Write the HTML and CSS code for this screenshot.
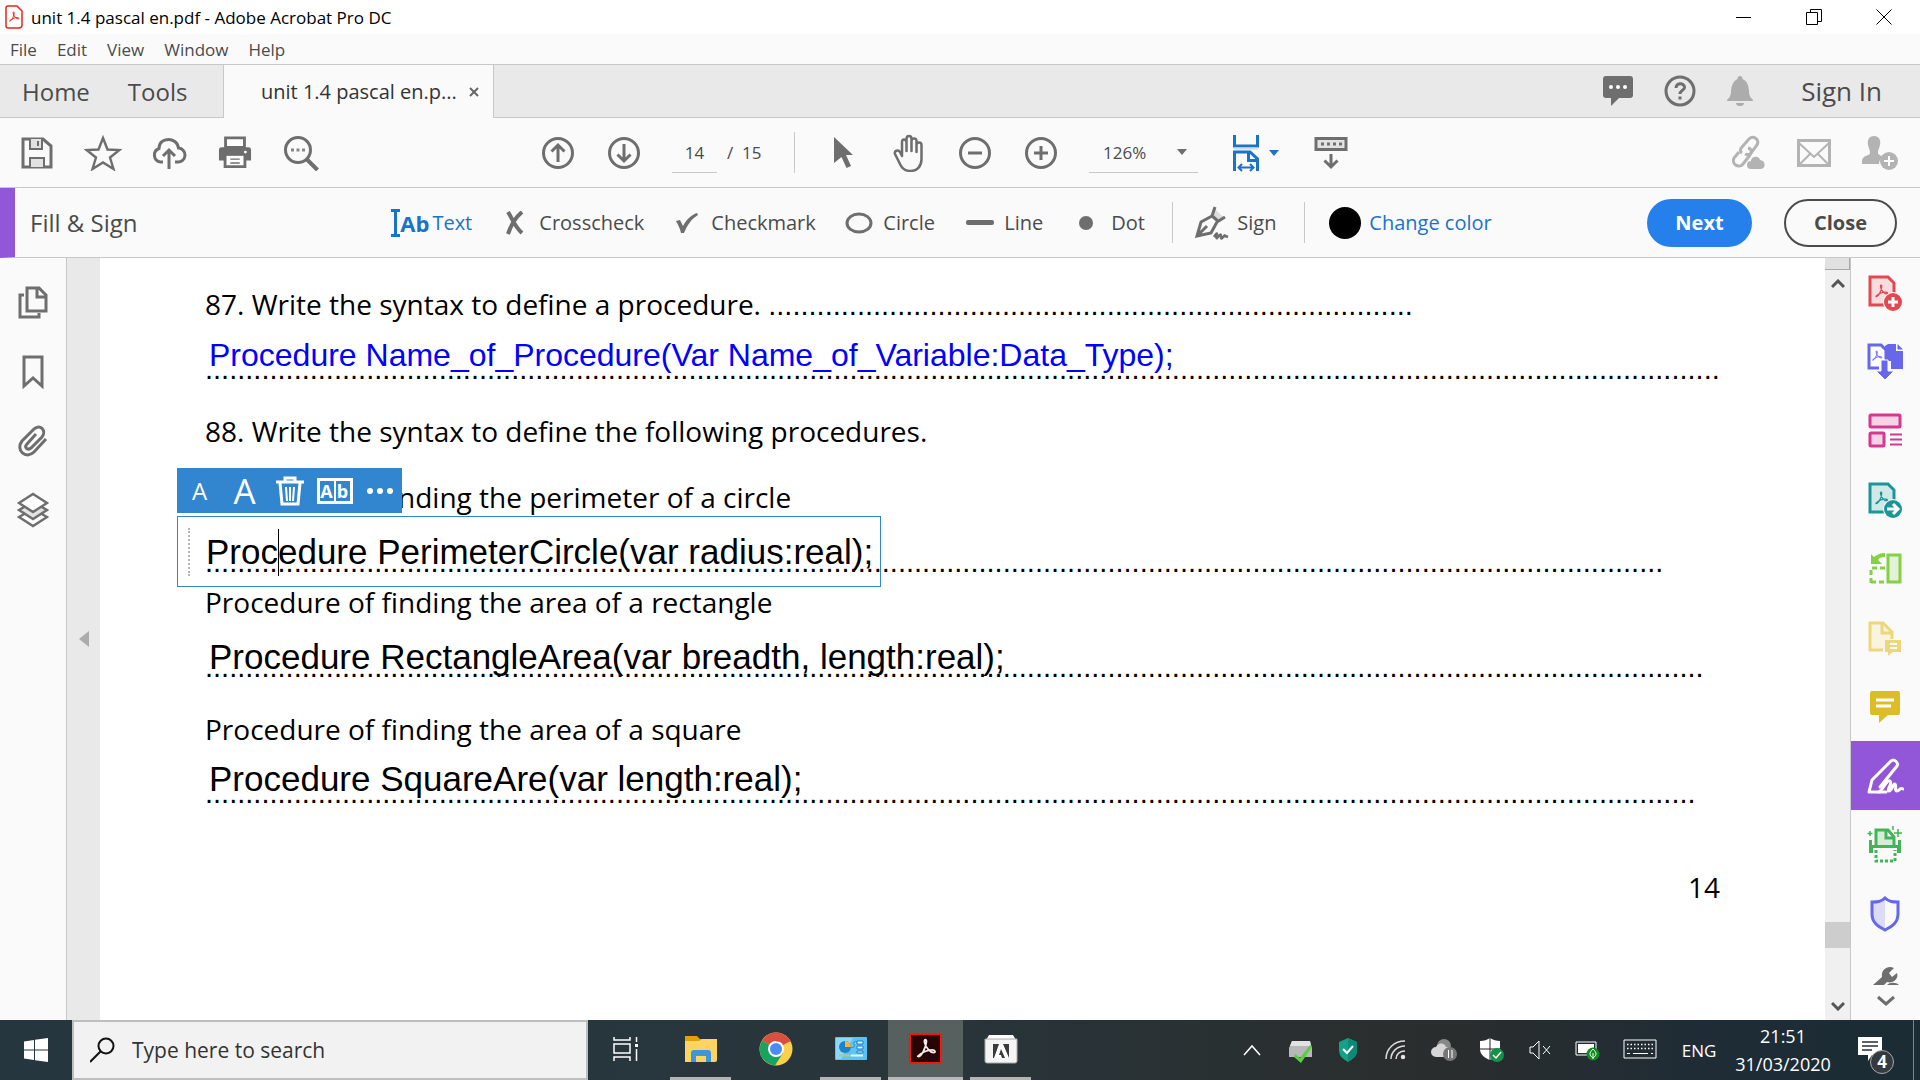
FILE: index.html
```html
<!DOCTYPE html>
<html lang="en">
<head>
<meta charset="utf-8">
<title>unit 1.4 pascal en.pdf - Adobe Acrobat Pro DC</title>
<link rel="stylesheet" href="styles.css">
</head>
<body>
<svg class="sprite" aria-hidden="true">
  <symbol id="acro" viewBox="0 0 24 24"><path fill="none" stroke="currentColor" stroke-width="2" stroke-linejoin="round" d="M3 20c3 2 9-9 9.500-16 0-3-3-3-2 1 1 5 6 11 10 11 2 0 2-3-2-3-5 0-12 3-15.500 7z"/></symbol>
</svg>
<div class="app">
  <header class="titlebar">
    <svg class="doc-icon" width="18" height="24" viewBox="0 0 18 24"><path d="M3 1h9l5 5v14a3 3 0 0 1-3 3H3a2 2 0 0 1-2-2V3a2 2 0 0 1 2-2z" fill="#fff" stroke="#e8251c" stroke-width="1.500"/><g color="#e8251c"><use href="#acro" x="3" y="6" width="12" height="12"/></g></svg>
    <span class="title">unit 1.4 pascal en.pdf - Adobe Acrobat Pro DC</span>
    <div class="window-buttons">
      <button aria-label="Minimize"><svg width="16" height="16"><path d="M0 8.500h15" stroke="#000" fill="none"/></svg></button>
      <button aria-label="Restore"><svg width="16" height="16" fill="none" stroke="#000"><path d="M.5 3.500h11v12H.5zM4.500 3.500v-3h11v12h-4"/></svg></button>
      <button aria-label="Close window"><svg width="16" height="16"><path d="M.5.500l15 15M15.500.500l-15 15" stroke="#000" fill="none"/></svg></button>
    </div>
  </header>
  <nav class="menubar"><button>File</button><button>Edit</button><button>View</button><button>Window</button><button>Help</button></nav>

  <div class="tabs">
    <div class="fixed-tabs"><button class="home">Home</button><button>Tools</button></div>
    <div class="doc-tab"><span>unit 1.4 pascal en.p...</span><button aria-label="Close tab"><svg width="12" height="12"><path d="M2 2l8 8M10 2l-8 8" stroke="#666" stroke-width="2"/></svg></button></div>
    <div class="account">
      <button aria-label="Comments"><svg width="32" height="34"><path d="M4 2h24a3 3 0 0 1 3 3v16a3 3 0 0 1-3 3H17l-8 8v-8H4a3 3 0 0 1-3-3V5a3 3 0 0 1 3-3z" fill="#6e6e6e"/><g fill="#fff"><circle cx="9" cy="13" r="2"/><circle cx="16" cy="13" r="2"/><circle cx="23" cy="13" r="2"/></g></svg></button>
      <button aria-label="Help"><svg width="32" height="32" fill="none" stroke="#6e6e6e" stroke-width="3"><circle cx="16" cy="16" r="14"/><path d="M12 13c0-6 9-5 8.500-.500C20 15.500 16 15.500 16 19M16 21.500v3"/></svg></button>
      <button aria-label="Notifications"><svg width="28" height="32" fill="#acacac"><path d="M14 1a2.500 2.500 0 0 1 2.500 3c5 2 6 7 6.500 12 0 4 1 6 4 9v1H1v-1c3-3 4-5 4-9 .5-5 2-10 6.500-12A2.500 2.500 0 0 1 14 1zM10 28h8a4 3 0 0 1-8 0z"/></svg></button>
      <a href="#signin">Sign In</a>
    </div>
  </div>

  <div class="toolbar">
    <div class="group file-group">
      <button aria-label="Save"><svg width="34" height="34" fill="none" stroke="#6e6e6e" stroke-width="3"><path d="M3 3h20l8 7v21H3z"/><path d="M10 3v10h12V3M10 31V22h14v9" stroke-width="2" fill="#e2e2e2"/><path d="M18 5v5" stroke-width="2"/></svg></button>
      <button aria-label="Star"><svg width="38" height="36"><path d="M19 3l4.500 11.500 12 .5-9.500 7.500 3.500 11.500L19 27.500 8.500 34 12 22.500 2.500 15l12-.500z" fill="none" stroke="#6e6e6e" stroke-width="2.400"/></svg></button>
      <button aria-label="Upload"><svg width="36" height="36" fill="none" stroke="#6e6e6e" stroke-width="3"><path d="M12 27H9.500a7 7 0 0 1-1.500-13.500C8 1.500 26 1.500 27.500 13A7 7 0 0 1 26.500 27H24M18 34V16M12 21l6-6 6 6"/></svg></button>
      <button aria-label="Print"><svg width="34" height="34" viewBox="0 0 36 36"><path d="M8 2h20v10H8z" fill="#fff" stroke="#6e6e6e" stroke-width="3"/><path d="M4 12h28a3 3 0 0 1 3 3v11h-5v8H6v-8H1V15a3 3 0 0 1 3-3z" fill="#6e6e6e"/><path d="M9 21h18v10H9z" fill="#fff"/><path d="M13 24.500h10M13 28.500h10" stroke="#6e6e6e" stroke-width="1.500"/><circle cx="29" cy="17" r="1.500" fill="#fff"/></svg></button>
      <button aria-label="Find"><svg width="36" height="36" fill="none" stroke="#6e6e6e" stroke-width="3"><circle cx="15" cy="15" r="12.500"/><path d="M23.500 24l11 11" stroke-width="4"/><path d="M8 15h3m2.500 0h3m2.500 0h3" stroke="#888"/></svg></button>
    </div>
    <div class="group view-group">
      <button aria-label="Previous page"><svg width="34" height="34" fill="none" stroke="#6e6e6e" stroke-width="3"><circle cx="17" cy="17" r="14.500"/><path d="M17 26V9M10.500 15.500L17 9l6.500 6.500"/></svg></button>
      <button aria-label="Next page"><svg width="34" height="34" fill="none" stroke="#6e6e6e" stroke-width="3"><circle cx="17" cy="17" r="14.500"/><path d="M17 8v17M10.500 18.500L17 25l6.500-6.500"/></svg></button>
      <label class="page-no"><input value="14" aria-label="Page number"></label><span class="page-total">/&nbsp; 15</span>
      <i class="divider"></i>
      <button aria-label="Select"><svg width="20" height="34" fill="#6e6e6e"><path d="M1 1l19 18h-7l5 11-4.500 2L8.500 21 1 27z"/></svg></button>
      <button aria-label="Hand"><svg width="34" height="38" fill="none" stroke="#6e6e6e" stroke-width="2.500" stroke-linejoin="round" stroke-linecap="round"><path d="M10 22V8c0-3.500 4-3.500 4.500 0v9-12c0-4 5-4 5 0v12-10c0-3.500 5-3.500 5 0v11-7c0-3.500 5-3.500 5 0v14c0 7-4 12-11 12-5 0-8-2-10-6L3 20c-1-3 3-5 5-2z"/></svg></button>
      <button aria-label="Zoom out"><svg width="34" height="34" fill="none" stroke="#6e6e6e" stroke-width="3"><circle cx="17" cy="17" r="14.500"/><path d="M10 17h14"/></svg></button>
      <button aria-label="Zoom in"><svg width="34" height="34" fill="none" stroke="#6e6e6e" stroke-width="3"><circle cx="17" cy="17" r="14.500"/><path d="M10 17h14M17 10v14"/></svg></button>
      <label class="zoom"><select aria-label="Zoom level"><option>126%</option></select><svg width="12" height="8"><path d="M1 1h10L6 7z" fill="#6e6e6e"/></svg></label>
      <button class="fit" aria-label="Fit width"><svg width="28" height="38" fill="none" stroke="#1b72cb" stroke-width="3"><path d="M2.500 1v11h23V1M2.500 37V18H18l7.500 7v12M16.500 18v8.500h8" /><path d="M2 14.500h24" stroke="#c9dcf0" stroke-width="2"/><path d="M7 33.500h14M10 30l-3.500 3.500L10 37M18 30l3.500 3.500L18 37" stroke-width="2"/></svg><svg width="10" height="8"><path d="M0 1h10L5 7z" fill="#1b72cb"/></svg></button>
      <button aria-label="Read mode"><svg width="34" height="34" fill="none" stroke="#6e6e6e" stroke-width="3"><path d="M2 2.500h30v11H2z" fill="#e2e2e2"/><path d="M7 8h3m3 0h3m3 0h3m3 0h3M17 18v13M10.500 24.500L17 31l6.500-6.500"/></svg></button>
    </div>
    <div class="group share-group">
      <button aria-label="Share link"><svg width="38" height="36" fill="none" stroke="#b3b3b3" stroke-width="3"><path d="M13 18c-3-2-1-5 0-6l7-8c4-4 11 0 8 6l-6 8c-2 2-4 2-6 1"/><path d="M19 13c4 1 4 4 2 7l-7 9c-4 5-12 0-9-6l5-6"/><path d="M22 34a4 4 0 0 1 0-8c0-5 8-6 9-1 6 0 6 9 1 9z" fill="#b3b3b3" stroke="none"/></svg></button>
      <button aria-label="Email"><svg width="34" height="28" fill="none" stroke="#b3b3b3" stroke-width="2"><path d="M1.500 1.500h31v25h-31z" stroke-width="3"/><path d="M2 4l15 14L32 4M2 26l11-11M32 26L21 15"/></svg></button>
      <button aria-label="Add people"><svg width="38" height="36" fill="#b3b3b3"><path d="M13 1c5 0 7 4 6 9-1 4-2 5-2 8 0 2 3 2 5 4-3 2-4 4-4 7H1v-3c0-6 8-5 8-8s-1-4-2-8c-1-5 1-9 6-9z"/><circle cx="28" cy="26" r="9"/><path d="M28 21v10M23 26h10" stroke="#fff" stroke-width="2"/></svg></button>
    </div>
  </div>

  <div class="fillbar">
    <h1>Fill &amp; Sign</h1>
    <div class="tools">
      <button class="blue t-text"><span class="ab"><svg width="9" height="28" fill="none" stroke="#1b72cb" stroke-width="3"><path d="M0 1.500h9M0 26.500h9M4.500 1v26"/></svg>Ab</span>Text</button>
      <button class="t-cross"><svg width="20" height="24" stroke="#6e6e6e" stroke-width="4" fill="none"><path d="M3 1c4 6 6 14 14 21M17 1C11 6 6 14 3 23"/></svg>Crosscheck</button>
      <button class="t-check"><svg width="24" height="22"><path d="M1 9l4-1 3 6C12 7 16 3 22 1l1 2C16 7 12 14 9 21H6C5 16 3 13 1 9z" fill="#6e6e6e"/></svg>Checkmark</button>
      <button class="t-circle"><svg width="28" height="22"><ellipse cx="14" cy="11" rx="12" ry="9" fill="none" stroke="#6e6e6e" stroke-width="3"/></svg>Circle</button>
      <button class="t-line"><svg width="28" height="6"><rect width="28" height="5" rx="2" fill="#6e6e6e"/></svg>Line</button>
      <button class="t-dot"><svg width="14" height="14"><circle cx="7" cy="7" r="7" fill="#6e6e6e"/></svg>Dot</button>
      <i class="divider"></i>
      <button class="t-sign"><svg width="34" height="34" fill="none" stroke="#6e6e6e" stroke-width="3"><path d="M20 3l9 9-4 4-8-7z" fill="#dcdcdc" stroke="none"/><path d="M20 1l-3 9L6 16 2 30l14-3 6-11 8-5M3 29l9-9M16 9l8 7"/><path d="M19 31c6-9 1 3 3 1s4-6 4-1 4-4 4-1l3 1" stroke-width="2.500"/></svg>Sign</button>
      <i class="divider"></i>
      <button class="blue t-color"><svg width="32" height="32"><circle cx="16" cy="16" r="16"/></svg>Change color</button>
    </div>
    <div class="actions"><button class="next">Next</button><button class="close">Close</button></div>
  </div>

  <main class="workspace">
    <aside class="left-pane">
      <button aria-label="Page thumbnails"><svg width="30" height="34" fill="none" stroke="#6e6e6e" stroke-width="3"><path d="M9 2h12l7 7v16H9zM19 2v9h9" /><path d="M6 9H2v22h19v-4"/></svg></button>
      <button aria-label="Bookmarks"><svg width="24" height="34" fill="none" stroke="#6e6e6e" stroke-width="3"><path d="M3 2h18v29l-9-8-9 8z"/></svg></button>
      <button aria-label="Attachments"><svg width="32" height="34" fill="none" stroke="#6e6e6e" stroke-width="3"><path d="M29 15L17 28c-8 8-19-2-12-11L17 5c6-6 13 2 8 8L14 24c-4 3-7-1-4-4l9-10"/></svg></button>
      <button aria-label="Layers"><svg width="34" height="36" fill="#fff" stroke="#6e6e6e" stroke-width="2.400"><path d="M3 25l14-8 14 8-14 9z"/><path d="M3 18l14-8 14 8-14 9z" fill="#e2e2e2"/><path d="M3 11l14-9 14 9-14 9z"/></svg></button>
    </aside>
    <button class="collapse" aria-label="Collapse pane"><svg width="10" height="16"><path d="M10 0v16L0 8z" fill="#acacac"/></svg></button>

    <article class="page">
      <p class="line">87. Write the syntax to define a procedure. <span class="leader">................................................................................</span></p>
      <div class="answer first">
        <span class="leader">............................................................................................................................................................................................</span>
        <span class="filled blue-ink">Procedure Name_of_Procedure(Var Name_of_Variable:Data_Type);</span>
      </div>
      <p class="line q88">88. Write the syntax to define the following procedures.</p>
      <p class="line sub">Procedure of finding the perimeter of a circle</p>
      <div class="answer">
        <span class="leader">.....................................................................................................................................................................................</span>
        <div class="editor">
          <div class="edit-menu">
            <button class="small-a" aria-label="Smaller text">A</button>
            <button class="big-a" aria-label="Larger text">A</button>
            <button aria-label="Delete"><svg width="28" height="30" fill="none" stroke="#fff" stroke-width="3"><path d="M0 6h28M9 5V2h10v3M4 7l2 21h16l2-21"/><path d="M10 11l1 14M14 11v14M18 11l-1 14" stroke-width="2"/></svg></button>
            <button aria-label="Comb field"><span class="comb"><span>A</span><span>b</span></span></button>
            <button aria-label="More"><svg width="26" height="6" fill="#fff"><circle cx="3" cy="3" r="3"/><circle cx="13" cy="3" r="3"/><circle cx="23" cy="3" r="3"/></svg></button>
          </div>
          <i class="grip"></i>
          <input value="Procedure PerimeterCircle(var radius:real);" aria-label="Answer">
          <i class="caret"></i>
        </div>
      </div>
      <p class="line">Procedure of finding the area of a rectangle</p>
      <div class="answer">
        <span class="leader">..........................................................................................................................................................................................</span>
        <span class="filled">Procedure RectangleArea(var breadth, length:real);</span>
      </div>
      <p class="line square">Procedure of finding the area of a square</p>
      <div class="answer last">
        <span class="leader">.........................................................................................................................................................................................</span>
        <span class="filled">Procedure SquareAre(var length:real);</span>
      </div>
      <p class="line folio">14</p>
    </article>

    <div class="scrollbar">
      <i class="split"></i>
      <button aria-label="Scroll up"><svg width="14" height="10"><path d="M1 8l6-6 6 6" fill="none" stroke="#555" stroke-width="3"/></svg></button>
      <i class="above"></i><i class="thumb"></i><i class="below"></i>
      <button aria-label="Scroll down"><svg width="14" height="10"><path d="M1 2l6 6 6-6" fill="none" stroke="#555" stroke-width="3"/></svg></button>
    </div>

    <aside class="right-pane">
      <button aria-label="Create PDF"><svg width="36" height="36" fill="none"><path d="M3 2h18l6 6v22H3z" fill="#f8dcde" stroke="#e34850" stroke-width="3"/><g color="#e34850"><use href="#acro" x="7" y="9" width="15" height="15"/></g><circle cx="26" cy="27" r="10" fill="#fafafa"/><circle cx="26" cy="27" r="9" fill="#e34850"/><path d="M26 22v10M21 27h10" stroke="#fff" stroke-width="3"/></svg></button>
      <button aria-label="Export PDF"><svg width="38" height="38"><path d="M13 25H3V2h12l5 5v9" fill="#fff" stroke="#6767ec" stroke-width="3"/><path d="M19 3l3-2h8v7h7v18H25v-8h-6z" fill="#6767ec"/><path d="M31.500 1L37 6.500h-5.500z" fill="#6767ec"/><g color="#6767ec"><use href="#acro" x="5" y="7" width="12" height="12"/></g><path d="M15 17h7v11h6l-9 9-9-9h5z" fill="#6767ec" stroke="#fafafa"/></svg></button>
      <button aria-label="Organize pages"><svg width="34" height="36" fill="#f5d2e6" stroke="#d83790" stroke-width="3"><rect x="2" y="2" width="30" height="12" rx="1"/><rect x="2" y="20" width="14" height="13" rx="1"/><path d="M22 21.500h12M22 26.500h12M22 31.500h12" stroke-width="2"/></svg></button>
      <button aria-label="Send"><svg width="36" height="36" fill="none"><path d="M3 2h18l6 6v22H3z" fill="#d0e8e8" stroke="#1b959a" stroke-width="3"/><g color="#1b959a"><use href="#acro" x="7" y="9" width="15" height="15"/></g><circle cx="26" cy="27" r="10" fill="#fafafa"/><circle cx="26" cy="27" r="9" fill="#1b959a"/><path d="M20 27h10M26 22l5 5-5 5" stroke="#fff" stroke-width="3"/></svg></button>
      <button aria-label="Rotate pages"><svg width="34" height="34" fill="none" stroke="#84d144" stroke-width="3"><rect x="20" y="3" width="12" height="27" fill="#e3f2d8"/><path d="M3 31V16h14M3 30h14" stroke-dasharray="5 3"/><path d="M3 2l3 3c3-2 6-4 11-4v4c-4 0-6 1-7 3l4 4H3z" fill="#84d144" stroke="none"/></svg></button>
      <button aria-label="Compare"><svg width="36" height="36" fill="none" stroke="#ecd87b" stroke-width="3"><path d="M16 30H3V3h13l9 9v7" fill="#f8f4e0"/><path d="M15 3v10h10"/><path d="M18 20h16v12h-8l-5 4v-4h-3z" fill="#ecd87b" stroke="none"/><path d="M23 24h7M23 28h7" stroke="#fff" stroke-width="2"/></svg></button>
      <button aria-label="Comment"><svg width="32" height="34"><path d="M3 1h26a2 2 0 0 1 2 2v20a2 2 0 0 1-2 2H19l-9 8v-8H3a2 2 0 0 1-2-2V3a2 2 0 0 1 2-2z" fill="#dcbd28"/><path d="M7 10h18M7 16h15" stroke="#fff" stroke-width="3"/></svg></button>
      <button class="selected-tool" aria-label="Fill and sign"><svg width="38" height="38" fill="none" stroke="#fff" stroke-width="3" stroke-linejoin="round" stroke-linecap="round"><path d="M20 35H3l3-12L25 4c3-3 8 2 6 5L14 30"/><path d="M13 35c4-2 8-13 11-11s-4 10-1 10 4-8 6-7-1 7 2 7 2-4 6-2"/></svg></button>
      <button aria-label="Scan"><svg width="36" height="38" fill="none" stroke="#44b556" stroke-width="3"><path d="M9 19V4h12l6 7v8M19 4v8h8" fill="#d5eed9"/><path d="M2 14v13h4v-5h24v5h4V14h-3v5H5v-5z" fill="#44b556" stroke="none"/><path d="M9 24v11h19V24" stroke-dasharray="3 2"/><path d="M3 5v5M.500 7.500h5M31 3v8M27 7h8M26 0v4" stroke-width="1.500"/></svg></button>
      <button aria-label="Protect"><svg width="30" height="36"><path d="M15 2C11 6 7 6 2 6v12c0 8 5 12 13 16z" fill="#dcdcf8"/><path d="M15 2C11 6 7 6 2 6v12c0 8 5 12 13 16 8-4 13-8 13-16V6c-5 0-9 0-13-4z" fill="none" stroke="#6767ec" stroke-width="3"/></svg></button>
      <button class="more" aria-label="More tools"><svg width="26" height="18" fill="#6e6e6e"><path d="M0 18l9-8c-1-7 5-12 12-9l-5 5 3 4 5-4c2 6-4 11-10 9l-3 3zM14 18c3-3 9-3 12 0z"/></svg><svg width="20" height="12"><path d="M2 2l8 7 8-7" stroke="#6e6e6e" stroke-width="3" fill="none"/></svg></button>
    </aside>
  </main>

  <footer class="taskbar">
    <button class="start" aria-label="Start"><svg width="24" height="24" fill="#fff"><path d="M0 3.500l10-1.500v9.500H0zM11 1.800L24 0v11.500H11zM0 12.500h10V22L0 20.500zM11 12.500h13V24l-13-1.800z"/></svg></button>
    <label class="search"><svg width="26" height="26" fill="none" stroke="#111" stroke-width="2"><circle cx="16" cy="9" r="7.500"/><path d="M10.500 14.500L0 25"/></svg><input placeholder="Type here to search" aria-label="Search"></label>
    <button class="task" aria-label="Task view"><svg width="26" height="24" fill="none" stroke="#fff" stroke-width="1.500"><path d="M1 0v3h16V0M1 24v-4h16v4M1 7h16v9H1zM23.500 0v5M23.500 12v12"/><path d="M22 7h3v3h-3z" fill="#fff" stroke="none"/></svg></button>
    <button class="task open" aria-label="File Explorer"><svg width="32" height="28"><path d="M0 1h12l3 3h15v6H0z" fill="#dfa20b"/><path d="M0 6h14l3-2h15v21a2 2 0 0 1-2 2H0z" fill="#fdd462"/><path d="M6 27V18a3 3 0 0 1 3-3h14a3 3 0 0 1 3 3v9h-5v-6H11v6z" fill="#3c96db"/></svg></button>
    <button class="task" aria-label="Chrome"><svg width="34" height="34"><circle cx="17" cy="17" r="16.500" fill="#fdd04b"/><path d="M17 17L3 8.500A16.500 16.500 0 0 1 31.500 9z" fill="#d94f41"/><path d="M17 17L3 8.500A16.500 16.500 0 0 0 16 33.500L24 21z" fill="#1aa260"/><circle cx="17" cy="17" r="8" fill="#fff"/><circle cx="17" cy="17" r="6" fill="#4c8bf5"/><path d="M17 9h14.500" stroke="#d94f41" stroke-width="1"/></svg></button>
    <button class="task open" aria-label="Control Panel"><svg width="32" height="24"><rect width="32" height="23" rx="1" fill="#5ac3f7"/><path d="M1 1h17L6 22H1z" fill="#8cd8fb"/><circle cx="10" cy="10" r="6" fill="#1f82c9"/><path d="M10 10V4a6 6 0 0 1 6 6z" fill="#ffb52b"/><path d="M16 10h3V5h3M22 4h6v3h-6zM22 9h6v3h-6zM22 14h6v2h-6z" fill="#e4f6ff" stroke="#1b7fc0"/><path d="M4 18.500h12" stroke="#b4c77f" stroke-width="2"/><path d="M16 18.500h12" stroke="#e4f6ff" stroke-width="2"/></svg></button>
    <button class="task open current" aria-label="Acrobat"><svg width="34" height="32"><rect x="1" y="1" width="31" height="29" fill="#280404" stroke="#f5170b" stroke-width="2"/><g color="#f4eeee"><use href="#acro" x="6" y="5" width="22" height="22"/></g></svg></button>
    <button class="task open" aria-label="Adobe installer"><svg width="34" height="30"><path d="M5 1h24l3 5H2z" fill="#fff"/><path d="M1 5h32v22a2 2 0 0 1-2 2H3a2 2 0 0 1-2-2z" fill="#f4f4f4" stroke="#aaa"/><path d="M9 10h16v14H9z" fill="#3a3a3a"/><path d="M10 24l5-14h4l6 14h-4l-4-9-2 6h2l1 3z" fill="#fff"/></svg></button>
    <div class="tray">
      <button aria-label="Show hidden icons"><svg width="18" height="14"><path d="M1 12l8-9 8 9" stroke="#fff" stroke-width="1.500" fill="none"/></svg></button>
      <button aria-label="Printer"><svg width="26" height="26"><path d="M5 4h18l2 7v9H2v-9z" fill="#b8b8ba"/><path d="M5 4h18l1 5H3z" fill="#e2e2e2"/><path d="M8 17l5 4L23 8l2 2-11 16-7-6z" fill="#58cf3e"/></svg></button>
      <button aria-label="Antivirus"><svg width="20" height="24"><path d="M10 0l9 4v8c0 6-4 9-9 12-5-3-9-6-9-12V4z" fill="#12a288"/><path d="M10 0l9 4v8c0 6-4 9-9 12z" fill="#0d8a75"/><path d="M5 11l4 4 6-7" fill="none" stroke="#fff" stroke-width="2"/></svg></button>
      <button aria-label="Network"><svg width="22" height="22" fill="none" stroke="#ddd" stroke-width="1.500"><path d="M1 20C1 10 9 2 20 2M6 20c0-7 6-13 14-13M11 20c0-5 4-8 9-8"/><circle cx="18" cy="18" r="1.500" fill="#fff"/></svg></button>
      <button aria-label="OneDrive"><svg width="26" height="24"><circle cx="13" cy="8" r="7" fill="#888"/><path d="M5 19a5 5 0 0 1 0-10c3-5 9-4 10 0 6 0 8 6 5 10z" fill="#d6d6d6"/><circle cx="19" cy="16" r="7" fill="#777"/><path d="M17.500 12v8M21 12v8" stroke="#fff"/></svg></button>
      <button aria-label="Defender"><svg width="26" height="26"><path d="M1 4c4 0 7-1 10-3 3 2 6 3 10 3v8c0 6-5 9-10 11C6 21 1 18 1 12z" fill="#fff"/><path d="M11 1v22M1 12h20" stroke="#222"/><circle cx="18" cy="18" r="7" fill="#16914a"/><path d="M14 18l3 3 5-6" stroke="#fff" stroke-width="1.500" fill="none"/></svg></button>
      <button aria-label="Volume muted"><svg width="22" height="20" fill="none" stroke="#fff"><path d="M1 7h3l6-6v18l-6-6H1zM14 6l7 8M21 6l-7 8"/></svg></button>
      <button aria-label="Battery"><svg width="26" height="22"><path d="M1 3h20v13H1z" fill="none" stroke="#fff"/><path d="M3 5h16v9H3z" fill="#fff"/><circle cx="18" cy="15" r="6.500" fill="#0e8a1e"/><path d="M18 10c4 4 4 6 0 9-4-3-4-5 0-9zM18 14v6" stroke="#fff" fill="none"/></svg></button>
      <button class="keys" aria-label="Keyboard"><svg width="34" height="22" fill="none" stroke="#fff"><path d="M1 1h32v18H1z"/><path d="M4 5.500h26M4 9.500h26" stroke-width="1.500" stroke-dasharray="1.500 2"/><path d="M4 14.500h3M10 14.500h15M28 14.500h2"/></svg></button>
      <button class="lang">ENG</button>
      <div class="clock"><span>21:51</span><span>31/03/2020</span></div>
      <button class="notify" aria-label="Notifications, 4 new"><svg width="24" height="26"><path d="M0 0h24v18H14l-4 6v-6H0z" fill="#fff"/><path d="M4 5h16M4 9h16M4 13h10" stroke="#243036" stroke-width="1.500"/></svg><b>4</b></button>
      <i class="peek"></i>
    </div>
  </footer>
</div>
</body>
</html>
```
FILE: styles.css
```css
* { box-sizing: border-box; }
body { margin: 0; font-family: "Open Sans", "Noto Sans", sans-serif; color: #4b4b4b; background: #fff; }
button { border: 0; background: none; padding: 0; margin: 0; font: inherit; color: inherit; display: flex; align-items: center; justify-content: center; white-space: nowrap; }
input, select { border: 0; background: none; padding: 0; margin: 0; font: inherit; color: inherit; outline: none; min-width: 0; }
a { color: inherit; text-decoration: none; }
svg { display: block; flex: none; }
i { display: block; }
.sprite { position: absolute; width: 0; height: 0; }
.app { display: flex; flex-direction: column; min-height: 100vh; background: #fafafa; }

.titlebar { display: flex; align-items: center; height: 34px; padding-left: 5px; background: #fff; color: #000; font-size: 17px; }
.title { margin-left: 8px; flex: 1; }
.window-buttons { display: flex; gap: 54px; padding-right: 28px; }
.menubar { display: flex; gap: 20px; height: 30px; padding-left: 10px; font-size: 17px; }

.tabs { display: flex; height: 54px; border-top: 1px solid #c8c8c8; background: #e9e9e9; font-size: 24px; }
.fixed-tabs { display: flex; gap: 38px; width: 224px; padding-left: 22px; border-right: 1px solid #c8c8c8; border-bottom: 1px solid #c8c8c8; }
.doc-tab { display: flex; align-items: center; justify-content: space-between; width: 269px; padding: 0 13px 0 37px; background: #fafafa; font-size: 20px; color: #333; }
.account { display: flex; flex: 1; align-items: center; justify-content: flex-end; gap: 30px; padding-right: 38px; border-left: 1px solid #c8c8c8; border-bottom: 1px solid #c8c8c8; }
.account a { margin-left: 17px; font-size: 26px; }

.toolbar { display: grid; grid-template-columns: 1fr auto 1fr; height: 70px; border-bottom: 1px solid #c8c8c8; font-size: 17px; }
.group { display: flex; align-items: center; }
.group button { width: 66px; height: 50px; }
.file-group { padding-left: 4px; }
.view-group { padding-right: 31px; }
.share-group { justify-content: flex-end; padding-right: 7px; }
.page-no { margin-left: 15px; width: 45px; height: 40px; border-bottom: 1px solid #c8c8c8; display: flex; }
.page-no input { width: 100%; text-align: center; }
.page-total { width: 77px; padding-left: 10px; }
.divider { width: 1px; height: 41px; background: #c8c8c8; }
.view-group .divider { margin-right: 15px; }
.zoom { display: flex; align-items: center; justify-content: space-between; width: 109px; height: 40px; margin-left: 15px; padding: 0 10px 0 14px; border-bottom: 1px solid #c8c8c8; }
.zoom select { appearance: none; width: 60px; }
.group .fit { width: 100px; gap: 9px; padding-left: 14px; }

.fillbar { display: grid; grid-template-columns: 1fr auto 1fr; align-items: center; height: 70px; border-bottom: 1px solid #c8c8c8; border-left: 15px solid #9256d9; font-size: 20px; }
.fillbar h1 { margin: 0 0 0 15px; font-size: 24px; font-weight: 400; }
.tools { display: flex; align-items: center; height: 46px; padding-right: 52px; }
.tools button { justify-content: flex-start; height: 46px; }
.blue { color: #1b72cb; }
.ab { display: flex; align-items: center; font-weight: 700; font-size: 22px; }
.tools .t-text { width: 114px; gap: 3px; }
.tools .t-cross { width: 170px; gap: 14px; }
.tools .t-check { width: 170px; gap: 12px; }
.tools .t-circle { width: 121px; gap: 10px; }
.tools .t-line { width: 113px; gap: 10px; }
.tools .t-dot { width: 93px; gap: 18px; }
.tools .t-sign { width: 131px; padding-left: 22px; gap: 8px; }
.tools .t-color { padding-left: 24px; gap: 8px; }
.actions { display: flex; justify-content: flex-end; gap: 32px; padding-right: 23px; font-weight: 700; }
.actions button { height: 48px; border-radius: 24px; }
.actions .next { width: 105px; background: #2680eb; color: #fff; }
.actions .close { width: 113px; border: 2px solid #4b4b4b; }

.workspace { display: flex; flex: 1; background: #fff; }
.left-pane { width: 67px; padding-top: 10px; border-right: 1px solid #c8c8c8; background: #fafafa; }
.left-pane button { width: 65px; height: 69px; }
.collapse { width: 33px; background: #e9e9e9; }
.page { flex: 1; min-width: 0; padding: 26px 0 0 105px; color: #000; overflow: hidden; white-space: nowrap; }
.line { margin: 0; height: 40px; line-height: 40px; font-size: 28px; }
.leader { height: 40px; line-height: 40px; font-family: "Liberation Sans", Arial, sans-serif; font-size: 29px; }
.answer { position: relative; display: flex; flex-direction: column; justify-content: flex-end; height: 50px; margin-top: 15px; }
.answer.first { height: 54px; margin-top: 11px; }
.answer.last { height: 54px; margin-top: 10px; }
.filled { position: absolute; left: 4px; top: 0; line-height: 40px; font-family: "Liberation Sans", Arial, sans-serif; font-size: 35px; }
.blue-ink { color: #00f; font-size: 32px; }
.q88 { margin-top: 22px; }
.sub { margin-top: 26px; }
.square { margin-top: 22px; }
.folio { margin-top: 54px; padding-right: 105px; text-align: right; }
.editor { position: absolute; left: -28px; top: -16px; width: 704px; height: 71px; padding: 15px 0 0 28px; border: 1px solid #3286d0; }
.editor input { display: block; width: 674px; height: 40px; font-family: "Liberation Sans", Arial, sans-serif; font-size: 35px; }
.edit-menu { position: absolute; left: -1px; top: -49px; width: 225px; height: 45px; display: grid; grid-template-columns: repeat(5, 1fr); background: #3286d0; color: #fff; }
.small-a { font-size: 24px; }
.big-a { font-size: 35px; line-height: 40px; }
.comb { display: flex; width: 36px; height: 26px; border: 3px solid #fff; font-size: 18px; font-weight: 700; line-height: 20px; }
.comb span { flex: 1; }
.comb span + span { border-left: 2px solid #fff; }
.grip { position: absolute; left: 10px; top: 11px; height: 48px; border-left: 2px dotted #b5b5b5; }
.caret { position: absolute; left: 100px; top: 12px; width: 1px; height: 47px; background: #000; }

.scrollbar { display: flex; flex-direction: column; width: 25px; background: #f0f0f0; }
.split { height: 12px; background: #e1e1e1; border: solid #a8a8a8; border-width: 0 1px 1px 0; }
.scrollbar button { height: 28px; }
.above { flex: 627; }
.thumb { height: 26px; background: #cdcdcd; }
.below { flex: 44; }

.right-pane { width: 70px; border-left: 1px solid #c8c8c8; background: #fafafa; }
.right-pane button { width: 69px; height: 69px; padding-right: 2px; }
.right-pane .selected-tool { background-color: #9256d9; }
.right-pane .more { flex-direction: column; gap: 10px; height: 72px; padding: 6px 0 0; }

.taskbar { display: flex; height: 60px; background: linear-gradient(90deg, #26363e, #28363c 45%, #2a2d2d 75%, #1e2c36 90%, #1b2c34); color: #fff; }
.start { width: 72px; }
.search { display: flex; align-items: center; width: 516px; padding-left: 16px; gap: 16px; border: 2px solid #bebebe; background: #f2f2f2; color: #222; font-size: 21px; }
.search input { flex: 1; }
.search input::placeholder { color: #333; opacity: 1; }
.task { width: 75px; border-bottom: 3px solid transparent; }
.open { background: linear-gradient(#b4b4b4, #b4b4b4) center bottom / 61px 3px no-repeat; background-origin: border-box; background-clip: border-box; }
.current { background: #55605f; border-color: #b9b9b9; }
.tray { display: flex; flex: 1; justify-content: flex-end; align-items: center; font-size: 17px; }
.tray button { width: 48px; height: 60px; }
.tray .keys { width: 56px; }
.tray .lang { width: 34px; margin: 0 16px 0 14px; }
.clock { display: flex; flex-direction: column; align-items: center; width: 102px; font-size: 18px; line-height: 28px; }
.tray .notify { position: relative; width: 79px; padding-right: 8px; }
.notify b { position: absolute; left: 36px; top: 30px; width: 24px; height: 24px; border: 1px solid #aaa; border-radius: 50%; background: #333b3e; line-height: 22px; text-align: center; }
.peek { width: 7px; height: 60px; border-left: 1px solid #788; }
```
